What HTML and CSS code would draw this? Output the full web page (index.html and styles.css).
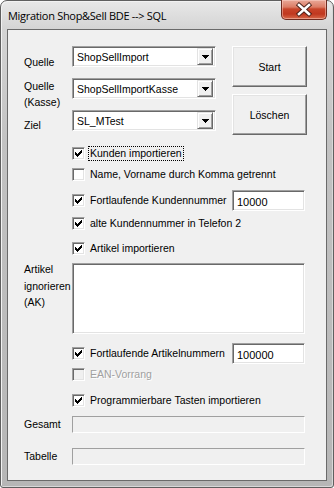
FILE: index.html
```html
<!DOCTYPE html>
<html lang="de">
<head>
<meta charset="utf-8">
<title>Migration Shop&amp;Sell BDE --&gt; SQL</title>
<link rel="stylesheet" href="styles.css">
</head>
<body>
<div class="window">
  <div class="titlebar">
    <span class="title">Migration Shop&amp;Sell BDE --&gt; SQL</span>
    <div class="close">
      <svg width="44" height="19" viewBox="0 0 44 19">
        <path d="M17 5 L27 14 M27 5 L17 14" stroke="#4a2018" stroke-width="4.4" stroke-linecap="square" fill="none"/>
        <path d="M17 5 L27 14 M27 5 L17 14" stroke="#ffffff" stroke-width="2.6" stroke-linecap="square" fill="none"/>
      </svg>
    </div>
  </div>
  <div class="client">
    <div class="top">
      <div class="fields">
        <div class="frow">
          <div class="lbl lbl-q1">Quelle</div>
          <div class="combo"><span class="ctext">ShopSellImport</span><span class="drop"><svg width="7" height="4" viewBox="0 0 7 4"><path d="M0 0h7v1h-7z M1 1h5v1h-5z M2 2h3v1h-3z M3 3h1v1h-1z" fill="#000"/></svg></span></div>
        </div>
        <div class="frow">
          <div class="lbl lbl-q2">Quelle<br>(Kasse)</div>
          <div class="combo"><span class="ctext">ShopSellImportKasse</span><span class="drop"><svg width="7" height="4" viewBox="0 0 7 4"><path d="M0 0h7v1h-7z M1 1h5v1h-5z M2 2h3v1h-3z M3 3h1v1h-1z" fill="#000"/></svg></span></div>
        </div>
        <div class="frow">
          <div class="lbl lbl-z">Ziel</div>
          <div class="combo"><span class="ctext">SL_MTest</span><span class="drop"><svg width="7" height="4" viewBox="0 0 7 4"><path d="M0 0h7v1h-7z M1 1h5v1h-5z M2 2h3v1h-3z M3 3h1v1h-1z" fill="#000"/></svg></span></div>
        </div>
      </div>
      <div class="buttons">
        <div class="btn">Start</div>
        <div class="btn">Löschen</div>
      </div>
    </div>

    <div class="check c1"><span class="box"><svg width="11" height="11" viewBox="0 0 11 11"><path class="tick" d="M8 2h1v1h-1z M7 3h2v1h-2z M2 4h1v1h-1z M6 4h3v1h-3z M2 5h2v1h-2z M5 5h3v1h-3z M2 6h5v1h-5z M3 7h3v1h-3z M4 8h1v1h-1z"/></svg></span><span class="ctl focus">Kunden importieren</span></div>
    <div class="check c2"><span class="box"></span><span class="ctl">Name, Vorname durch Komma getrennt</span></div>
    <div class="check c3 withedit"><span class="box"><svg width="11" height="11" viewBox="0 0 11 11"><path class="tick" d="M8 2h1v1h-1z M7 3h2v1h-2z M2 4h1v1h-1z M6 4h3v1h-3z M2 5h2v1h-2z M5 5h3v1h-3z M2 6h5v1h-5z M3 7h3v1h-3z M4 8h1v1h-1z"/></svg></span><span class="ctl clip">Fortlaufende Kundennummer</span><span class="edit">10000</span></div>
    <div class="check c4"><span class="box"><svg width="11" height="11" viewBox="0 0 11 11"><path class="tick" d="M8 2h1v1h-1z M7 3h2v1h-2z M2 4h1v1h-1z M6 4h3v1h-3z M2 5h2v1h-2z M5 5h3v1h-3z M2 6h5v1h-5z M3 7h3v1h-3z M4 8h1v1h-1z"/></svg></span><span class="ctl">alte Kundennummer in Telefon 2</span></div>
    <div class="check c5"><span class="box"><svg width="11" height="11" viewBox="0 0 11 11"><path class="tick" d="M8 2h1v1h-1z M7 3h2v1h-2z M2 4h1v1h-1z M6 4h3v1h-3z M2 5h2v1h-2z M5 5h3v1h-3z M2 6h5v1h-5z M3 7h3v1h-3z M4 8h1v1h-1z"/></svg></span><span class="ctl">Artikel importieren</span></div>

    <div class="memorow">
      <div class="lbl lbl-memo">Artikel<br>ignorieren<br>(AK)</div>
      <div class="memo"></div>
    </div>

    <div class="check c6 withedit"><span class="box"><svg width="11" height="11" viewBox="0 0 11 11"><path class="tick" d="M8 2h1v1h-1z M7 3h2v1h-2z M2 4h1v1h-1z M6 4h3v1h-3z M2 5h2v1h-2z M5 5h3v1h-3z M2 6h5v1h-5z M3 7h3v1h-3z M4 8h1v1h-1z"/></svg></span><span class="ctl clip">Fortlaufende Artikelnummern</span><span class="edit">100000</span></div>
    <div class="check c7 disabled"><span class="box"></span><span class="ctl">EAN-Vorrang</span></div>
    <div class="check c8"><span class="box"><svg width="11" height="11" viewBox="0 0 11 11"><path class="tick" d="M8 2h1v1h-1z M7 3h2v1h-2z M2 4h1v1h-1z M6 4h3v1h-3z M2 5h2v1h-2z M5 5h3v1h-3z M2 6h5v1h-5z M3 7h3v1h-3z M4 8h1v1h-1z"/></svg></span><span class="ctl">Programmierbare Tasten importieren</span></div>

    <div class="progrow p1">
      <div class="lbl">Gesamt</div>
      <div class="bar"></div>
    </div>
    <div class="progrow p2">
      <div class="lbl">Tabelle</div>
      <div class="bar"></div>
    </div>
  </div>
</div>
</body>
</html>
```

FILE: styles.css
```css
* { box-sizing: border-box; }

html, body {
  margin: 0;
  padding: 0;
}

body {
  width: 334px;
  height: 488px;
  background: #ffffff;
  font-family: "Liberation Sans", Arial, sans-serif;
  font-size: 10.5px;
  color: #000;
  overflow: hidden;
}

.window {
  width: 334px;
  height: 488px;
  border: 1px solid #5f5f5f;
  border-radius: 7px 7px 3px 3px;
  background: linear-gradient(to bottom, #e8e8e8 0px, #d4d4d4 28px, #c2c2c2 140px, #b6b6b6 488px);
  box-shadow: inset 1px 1px 0 #f2f2f2, inset -1px -1px 0 #d8d8d8;
  padding: 0 6px 6px 6px;
  display: flex;
  flex-direction: column;
}

.titlebar {
  height: 28px;
  display: flex;
  align-items: flex-start;
  flex-shrink: 0;
}

.title {
  font-family: "Open Sans", "Noto Sans", sans-serif;
  font-size: 11px;
  letter-spacing: -0.3px;
  line-height: 16px;
  margin-top: 7px;
  padding-left: 1px;
  color: #000;
  white-space: nowrap;
}

.close {
  margin-left: auto;
  margin-top: -1px;
  width: 46px;
  height: 20px;
  border: 1px solid #6e2b20;
  border-top: none;
  border-radius: 0 0 5px 5px;
  background: linear-gradient(to bottom, #e9a898 0px, #dc7d66 7px, #c8442a 9px, #c0381f 14px, #d8694a 19px);
  box-shadow: inset 0 0 0 1px rgba(255, 220, 210, 0.45);
  display: flex;
  align-items: flex-start;
  justify-content: center;
}

.close svg { display: block; }

.client {
  height: 452px;
  border: 1px solid #6a6a6a;
  background: #f0f0f0;
  padding: 16px 0 0 16px;
  display: flex;
  flex-direction: column;
  flex-shrink: 0;
}

/* top area */
.top {
  display: flex;
  height: 96px;
}

.fields {
  display: flex;
  flex-direction: column;
  width: 192px;
}

.frow {
  display: flex;
  height: 32px;
}

.lbl {
  width: 48px;
  flex-shrink: 0;
  line-height: 16px;
  white-space: nowrap;
}

.lbl-q1 { padding-top: 8px; }
.lbl-q2 { padding-top: 0; }
.lbl-z { padding-top: 7px; }

.combo {
  width: 144px;
  height: 21px;
  border: 1px solid;
  border-color: #a0a0a0 #ffffff #ffffff #a0a0a0;
  box-shadow: inset 1px 1px 0 #696969, inset -1px -1px 0 #e3e3e3;
  background: #ffffff;
  padding: 2px 2px 2px 2px;
  display: flex;
  align-items: stretch;
}

.ctext {
  flex: 1;
  padding-left: 2px;
  line-height: 16px;
}

.drop {
  width: 16px;
  height: 17px;
  margin-top: -1px;
  background: #f0f0f0;
  border: 1px solid;
  border-color: #e3e3e3 #696969 #696969 #e3e3e3;
  box-shadow: inset 1px 1px 0 #ffffff, inset -1px -1px 0 #a0a0a0;
  display: flex;
  align-items: center;
  justify-content: center;
}

.drop svg { display: block; shape-rendering: crispEdges; margin-top: 1px; }

.buttons {
  margin-left: 16px;
  display: flex;
  flex-direction: column;
  gap: 7px;
}

.btn {
  width: 75px;
  height: 41px;
  border: 1px solid;
  border-color: #ffffff #696969 #696969 #ffffff;
  box-shadow: inset -1px -1px 0 #a0a0a0, inset 1px 1px 0 #e3e3e3;
  background: #f0f0f0;
  display: flex;
  align-items: center;
  justify-content: center;
  padding-top: 1px;
}

/* checkbox rows */
.check {
  display: flex;
  align-items: center;
  margin-left: 48px;
  width: 233px;
  height: 13px;
}

.check.withedit { height: 21px; }

.c1 { margin-top: 5px; }
.c2 { margin-top: 8px; }
.c3 { margin-top: 9px; }
.c4 { margin-top: 6px; }
.c5 { margin-top: 12px; }
.c6 { margin-top: 9px; }
.c7 { margin-top: 4px; }
.c8 { margin-top: 13px; }

.box {
  width: 13px;
  height: 13px;
  flex-shrink: 0;
  border: 1px solid;
  border-color: #a0a0a0 #ffffff #ffffff #a0a0a0;
  box-shadow: inset 1px 1px 0 #696969, inset -1px -1px 0 #e3e3e3;
  background: #ffffff;
}

.box svg { display: block; shape-rendering: crispEdges; }
.tick { fill: #000; }

.ctl {
  margin-left: 5px;
  line-height: 13px;
  white-space: nowrap;
}

.ctl.clip {
  width: 137px;
  overflow: hidden;
}

.focus {
  margin-left: 4px;
  padding: 0 1px;
  outline: 1px dotted #000;
  outline-offset: 0;
}

.disabled .box {
  background: #f0f0f0;
}

.disabled .ctl {
  color: #a0a0a0;
  text-shadow: 1px 1px 0 #ffffff;
}

.edit {
  margin-left: auto;
  width: 73px;
  height: 21px;
  flex-shrink: 0;
  border: 1px solid;
  border-color: #a0a0a0 #ffffff #ffffff #a0a0a0;
  box-shadow: inset 1px 1px 0 #696969, inset -1px -1px 0 #e3e3e3;
  background: #ffffff;
  padding: 4px 0 0 4px;
  line-height: 14px;
  font-size: 11px;
}

/* memo */
.memorow {
  display: flex;
  margin-top: 8px;
}

.lbl-memo {
  margin-top: -2px;
  line-height: 16.5px;
}

.memo {
  width: 233px;
  height: 71px;
  border: 1px solid;
  border-color: #a0a0a0 #ffffff #ffffff #a0a0a0;
  box-shadow: inset 1px 1px 0 #696969, inset -1px -1px 0 #e3e3e3;
  background: #ffffff;
}

/* progress */
.progrow {
  display: flex;
  align-items: center;
  height: 17px;
}

.p1 { margin-top: 9px; }
.p2 { margin-top: 15px; }

.progrow .lbl { line-height: 17px; margin-top: -1px; }

.bar {
  width: 233px;
  height: 17px;
  border: 1px solid;
  border-color: #a0a0a0 #ffffff #ffffff #a0a0a0;
  background: #f0f0f0;
}
```
